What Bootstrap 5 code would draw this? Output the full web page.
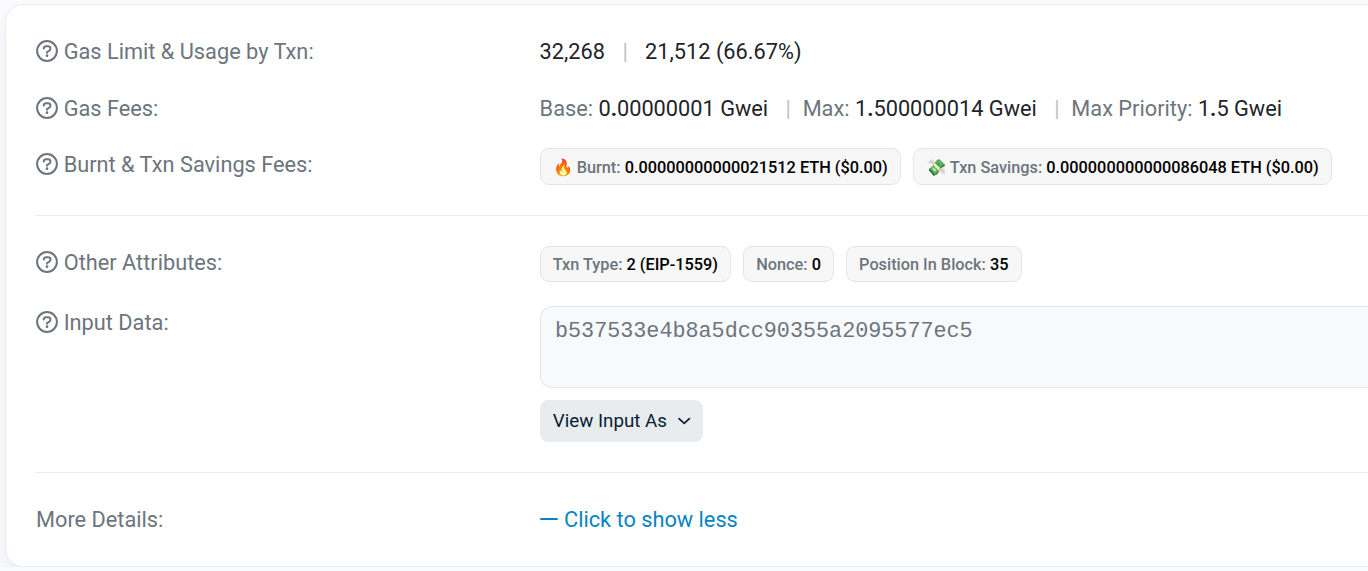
<!DOCTYPE html>
<html lang="en">
<head>
<meta charset="utf-8">
<meta name="viewport" content="width=device-width, initial-scale=1">
<title>Transaction Details</title>
<link href="https://cdn.jsdelivr.net/npm/bootstrap@5.3.0/dist/css/bootstrap.min.css" rel="stylesheet">
<style>
  body { background: #fafbfd; font-family: Roboto, "Liberation Sans", sans-serif; font-size: 21.75px; line-height: 1.5; color: #212529; overflow: hidden; }
  .tx-card { height: 563px; margin: 4px 0 0 5px; border: 1px solid #e9ecef; border-right: 0; border-radius: 18px 0 0 18px; box-shadow: 0 12px 18px rgba(189,197,209,.2); }
  .tx-card .card-body { padding: 31px 0 0 30px; }
  .tx-row { display: flex; margin-bottom: 24px; }
  .tx-row.fees { margin-bottom: 23px; }
  .tx-row.before-rule { margin-bottom: 30px; }
  .tx-row.after-rule { margin-top: 30px; }
  .tx-row.more { margin-top: 31px; }
  .tx-label { width: 503.6px; flex: none; color: #6c757d; white-space: nowrap; }
  .tagged .tx-label, .input-row .tx-label { padding-top: 1px; }
  .tx-value { flex: 1; white-space: nowrap; min-width: 0; }
  .muted { color: #6c757d; }
  .q-icon { width: 22px; height: 22px; margin-right: 5.7px; vertical-align: -3px; display: inline-block; }
  .sep { color: #bcc1c9; margin: 0 12px; }
  .sep-tight { margin-right: 6.4px; }
  .tx-rule { border: 0; border-top: 1px solid #e9ecef; opacity: 1; margin: 0; }
  .tag { display: inline-flex; align-items: center; height: 36px; padding: 1px 12.1px 0; border: 1px solid #e4e5e6; border-radius: 9px; background: #f7f7f7; color: #000; font-size: 16.31px; font-weight: 500; line-height: 1; white-space: pre; }
  .tag-fee { height: 37px; padding: 2px 12px 0; }
  .input-data { width: 100%; height: 82px; resize: none; display: block; padding: 9px 14.4px; border: 1px solid #e4e7ea; border-right: 0; border-radius: 12px 0 0 12px; background: #f8f9fb; color: #6c757d; font-family: "Liberation Mono", monospace; font-size: 21.75px; line-height: 1.5; outline: 0; }
  .btn-view { --bs-btn-font-size: 18.75px; --bs-btn-color: #081d35; --bs-btn-bg: #e9ecef; --bs-btn-border-color: #e9ecef; height: 42px; margin-top: 12px; padding: 0 11.2px 0 12.2px; border-radius: 8px; line-height: 1; }
  .show-less { color: #0784c3; text-decoration: none; }
  .minus { margin-right: 6.4px; vertical-align: -3px; }
</style>
</head>
<body>
<svg class="d-none">
  <symbol id="question" viewBox="0 0 22 22">
    <circle cx="11" cy="11" r="9.9" fill="none" stroke="currentColor" stroke-width="2"/>
    <path d="M7.7 8.5C7.9 7 8.8 6.2 10.2 6.2h1.5c1.7 0 2.8 1 2.8 2.4 0 1-.5 1.7-1.4 2.2L11 12v.8" fill="none" stroke="currentColor" stroke-width="2" stroke-linecap="round" stroke-linejoin="round"/>
    <circle cx="11" cy="15.7" r="1.35" fill="currentColor"/>
  </symbol>
</svg>
<main class="card tx-card">
  <div class="card-body">
    <div class="tx-row">
      <div class="tx-label"><svg class="q-icon"><use href="#question"/></svg>Gas Limit &amp; Usage by Txn:</div>
      <div class="tx-value">32,268 <span class="sep">|</span> 21,512 (66.67%)</div>
    </div>
    <div class="tx-row fees">
      <div class="tx-label"><svg class="q-icon"><use href="#question"/></svg>Gas Fees:</div>
      <div class="tx-value"><span class="muted">Base:</span> 0<b>.</b>00000001 Gwei <span class="sep sep-tight">|</span> <span class="muted">Max:</span> 1<b>.</b>500000014 Gwei <span class="sep sep-tight">|</span> <span class="muted">Max Priority:</span> 1<b>.</b>5 Gwei</div>
    </div>
    <div class="tx-row tagged before-rule">
      <div class="tx-label"><svg class="q-icon"><use href="#question"/></svg>Burnt &amp; Txn Savings Fees:</div>
      <div class="tx-value d-flex"><span class="tag tag-fee me-2">🔥 <span class="muted">Burnt: </span>0.00000000000021512 ETH ($0.00)</span><span class="tag tag-fee ms-1">💸 <span class="muted">Txn Savings: </span>0.000000000000086048 ETH ($0.00)</span></div>
    </div>
    <hr class="tx-rule">
    <div class="tx-row tagged after-rule">
      <div class="tx-label"><svg class="q-icon"><use href="#question"/></svg>Other Attributes:</div>
      <div class="tx-value d-flex"><span class="tag me-2"><span class="muted">Txn Type: </span>2 (EIP-1559)</span><span class="tag ms-1 me-2"><span class="muted">Nonce: </span>0</span><span class="tag ms-1"><span class="muted">Position In Block: </span>35</span></div>
    </div>
    <div class="tx-row input-row before-rule">
      <div class="tx-label"><svg class="q-icon"><use href="#question"/></svg>Input Data:</div>
      <div class="tx-value">
        <textarea class="input-data" readonly>b537533e4b8a5dcc90355a2095577ec5</textarea>
        <button type="button" class="btn btn-view d-inline-flex align-items-center">View Input As<svg class="ms-2" width="16" height="14" viewBox="0 0 16 14" fill="none" stroke="currentColor" stroke-width="1.7" stroke-linecap="round" stroke-linejoin="round"><path d="M4 4.7l5.2 4.7 5.2-4.7"/></svg></button>
      </div>
    </div>
    <hr class="tx-rule">
    <div class="tx-row more">
      <div class="tx-label">More Details:</div>
      <div class="tx-value"><a href="#" class="show-less"><svg class="minus" width="18" height="22" viewBox="0 0 18 22"><path d="M1 11h16" stroke="currentColor" stroke-width="2" stroke-linecap="round"/></svg>Click to show less</a></div>
    </div>
  </div>
</main>
<script src="https://cdn.jsdelivr.net/npm/bootstrap@5.3.0/dist/js/bootstrap.bundle.min.js"></script>
</body>
</html>
